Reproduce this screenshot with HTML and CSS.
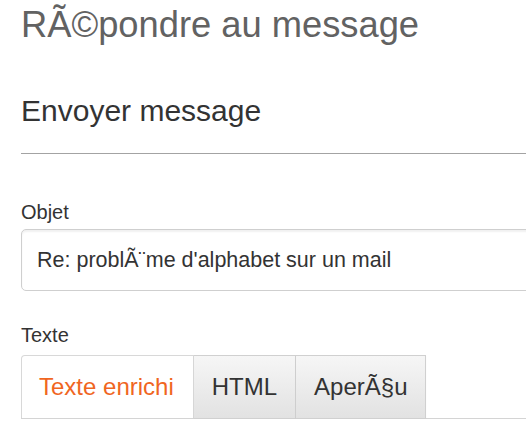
FILE: index.html
```html
<!DOCTYPE html>
<html lang="fr">
<head>
<meta charset="utf-8">
<title>RÃ©pondre au message</title>
<link rel="stylesheet" href="styles.css">
</head>
<body>
<div class="page">
  <h1 class="title">RÃ©pondre au message</h1>
  <h2 class="subtitle">Envoyer message</h2>
  <hr class="sep">
  <form class="form">
    <label class="label" for="objet">Objet</label>
    <div class="input" id="objet">Re: problÃ¨me d'alphabet sur un mail</div>
    <label class="label label-texte">Texte</label>
    <div class="tabs">
      <div class="tab tab-active">Texte enrichi</div>
      <div class="tab">HTML</div>
      <div class="tab">AperÃ§u</div>
    </div>
  </form>
</div>
</body>
</html>
```

FILE: styles.css
```css
html, body {
  margin: 0;
  padding: 0;
  background: #fff;
  overflow: hidden;
}
body {
  font-family: "Liberation Sans", Arial, sans-serif;
  color: #333;
}
.page {
  width: 580px;
  padding-left: 21px;
}
.title {
  margin: 5px 0 0;
  font-size: 36.3px;
  line-height: 40px;
  font-weight: normal;
  color: #626262;
}
.subtitle {
  margin: 49px 0 0;
  font-size: 30px;
  line-height: 33px;
  font-weight: normal;
  color: #333;
}
.sep {
  margin: 26px 0 0;
  border: 0;
  height: 1px;
  background: #a3a3a3;
}
.form {
  display: flex;
  flex-direction: column;
}
.label {
  display: block;
  margin-top: 46px;
  font-size: 20px;
  line-height: 24px;
  color: #333;
}
.input {
  margin-top: 5px;
  height: 60px;
  display: flex;
  align-items: center;
  padding: 0 15px;
  border: 1px solid #cfcfcf;
  border-radius: 5px;
  box-shadow: inset 0 2px 2px rgba(0,0,0,0.06);
  font-size: 21.5px;
  color: #333;
}
.label-texte {
  margin-top: 32px;
}
.tabs {
  margin-top: 8px;
  display: flex;
  border-bottom: 1px solid #d4d4d4;
  height: 63px;
}
.tab {
  display: flex;
  align-items: center;
  padding: 0 18px;
  font-size: 24px;
  color: #333;
  border: 1px solid #d0d0d0;
  border-left: 0;
  background: linear-gradient(#f6f6f6, #e2e2e2);
  box-shadow: 0 1px 1px rgba(0,0,0,0.06);
  margin-bottom: -1px;
}
.tab-active {
  padding: 0 19px 0 17px;
  background: #fff;
  color: #f0661f;
  border: 1px solid #d8d8d8;
  border-bottom: 0;
  border-radius: 4px 0 0 0;
  box-shadow: none;
  margin-bottom: 0;
}
```
